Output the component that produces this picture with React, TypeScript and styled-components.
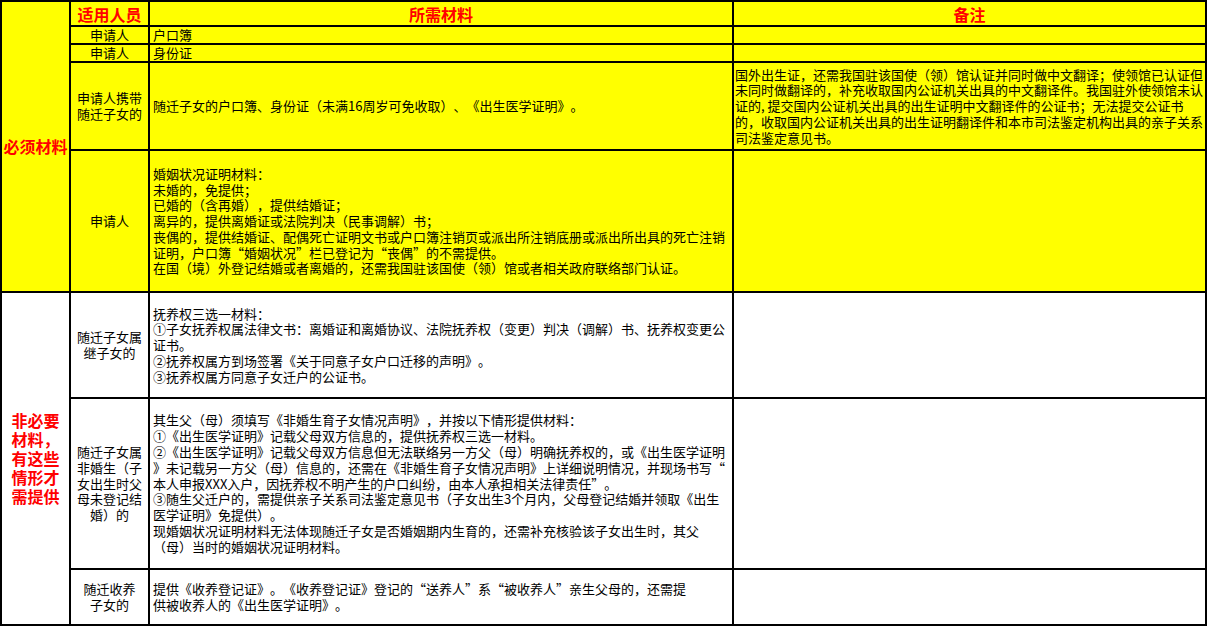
import React, { Fragment } from 'react';
import styled, { createGlobalStyle } from 'styled-components';

// Page reset: the sheet sits flush in the top-left corner
const GlobalStyle = createGlobalStyle`
  html, body {
    margin: 0;
    padding: 0;
    background: #ffffff;
  }
  body {
    font-family: "Noto Sans CJK SC", "Noto Sans", sans-serif;
    text-spacing-trim: space-all;
  }
`;

type Tone = 'yellow' | 'white';

interface Row {
    who: string[];
    material: string[];
    note: string[];
}

// The black grid background + 2px gaps draw the cell borders
const Sheet = styled.div`
  display: grid;
  grid-template-columns: 67px 77px 582px 471px;
  grid-template-rows: 23px 16px 16px 86px 140px 104px 169px 54px;
  gap: 2px;
  padding: 2px;
  width: 1207px;
  box-sizing: border-box;
  background: #000000;
`;

const Cell = styled.div<{ $tone: Tone }>`
  display: flex;
  align-items: center;
  background: ${(p) => (p.$tone === 'yellow' ? '#ffff00' : '#ffffff')};
  color: #000000;
  font-size: 13px;
  line-height: 15.8px;
  white-space: nowrap;
  overflow: hidden;
  min-width: 0;
  text-spacing-trim: space-all;
`;

const GroupCell = styled(Cell)<{ $rows: string }>`
  grid-column: 1;
  grid-row: ${(p) => p.$rows};
  justify-content: center;
  text-align: center;
  color: #ff0000;
  font-size: 16px;
  font-weight: 700;
  line-height: 19px;
  overflow: visible;
`;

const HeadCell = styled(Cell)`
  justify-content: center;
  color: #ff0000;
  font-size: 16px;
  font-weight: 700;
  line-height: 20px;
`;

const WhoCell = styled(Cell)`
  justify-content: center;
  text-align: center;
`;

const MaterialCell = styled(Cell)`
  padding-left: 3px;
`;

const NoteCell = styled(Cell)`
  padding-left: 1px;
`;

const required: Row[] = [
    { who: ['申请人'], material: ['户口簿'], note: [] },
    { who: ['申请人'], material: ['身份证'], note: [] },
    {
        who: ['申请人携带', '随迁子女的'],
        material: ['随迁子女的户口簿、身份证（未满16周岁可免收取）、《出生医学证明》。'],
        note: [
            '国外出生证，还需我国驻该国使（领）馆认证并同时做中文翻译；使领馆已认证但',
            '未同时做翻译的，补充收取国内公证机关出具的中文翻译件。我国驻外使领馆未认',
            '证的, 提交国内公证机关出具的出生证明中文翻译件的公证书；无法提交公证书',
            '的，收取国内公证机关出具的出生证明翻译件和本市司法鉴定机构出具的亲子关系',
            '司法鉴定意见书。',
        ],
    },
    {
        who: ['申请人'],
        material: [
            '婚姻状况证明材料：',
            '未婚的，免提供；',
            '已婚的（含再婚），提供结婚证；',
            '离异的，提供离婚证或法院判决（民事调解）书；',
            '丧偶的，提供结婚证、配偶死亡证明文书或户口簿注销页或派出所注销底册或派出所出具的死亡注销',
            '证明，户口簿“婚姻状况”栏已登记为“丧偶”的不需提供。',
            '在国（境）外登记结婚或者离婚的，还需我国驻该国使（领）馆或者相关政府联络部门认证。',
        ],
        note: [],
    },
];

const optional: Row[] = [
    {
        who: ['随迁子女属', '继子女的'],
        material: [
            '抚养权三选一材料：',
            '①子女抚养权属法律文书：离婚证和离婚协议、法院抚养权（变更）判决（调解）书、抚养权变更公',
            '证书。',
            '②抚养权属方到场签署《关于同意子女户口迁移的声明》。',
            '③抚养权属方同意子女迁户的公证书。',
        ],
        note: [],
    },
    {
        who: ['随迁子女属', '非婚生（子', '女出生时父', '母未登记结', '婚）的'],
        material: [
            '其生父（母）须填写《非婚生育子女情况声明》，并按以下情形提供材料：',
            '①《出生医学证明》记载父母双方信息的，提供抚养权三选一材料。',
            '②《出生医学证明》记载父母双方信息但无法联络另一方父（母）明确抚养权的，或《出生医学证明',
            '》未记载另一方父（母）信息的，还需在《非婚生育子女情况声明》上详细说明情况，并现场书写“',
            '本人申报XXX入户，因抚养权不明产生的户口纠纷，由本人承担相关法律责任”。',
            '③随生父迁户的，需提供亲子关系司法鉴定意见书（子女出生3个月内，父母登记结婚并领取《出生',
            '医学证明》免提供）。',
            '现婚姻状况证明材料无法体现随迁子女是否婚姻期内生育的，还需补充核验该子女出生时，其父',
            '（母）当时的婚姻状况证明材料。',
        ],
        note: [],
    },
    {
        who: ['随迁收养', '子女的'],
        material: [
            '提供《收养登记证》。《收养登记证》登记的“送养人”系“被收养人”亲生父母的，还需提',
            '供被收养人的《出生医学证明》。',
        ],
        note: [],
    },
];

// Render wrapped lines the way the sheet breaks them
function Lines({ lines }: { lines: string[] }) {
    return (
        <div>
            {lines.map((line, i) => (
                <Fragment key={i}>
                    {i > 0 && <br />}
                    {line}
                </Fragment>
            ))}
        </div>
    );
}

function Rows({ rows, tone }: { rows: Row[]; tone: Tone }) {
    return (
        <>
            {rows.map((row, i) => (
                <Fragment key={i}>
                    <WhoCell $tone={tone}>
                        <Lines lines={row.who} />
                    </WhoCell>
                    <MaterialCell $tone={tone}>
                        <Lines lines={row.material} />
                    </MaterialCell>
                    <NoteCell $tone={tone}>
                        <Lines lines={row.note} />
                    </NoteCell>
                </Fragment>
            ))}
        </>
    );
}

function App() {
    return (
        <>
            <GlobalStyle />
            <Sheet>
                <GroupCell $tone="yellow" $rows="1 / span 5">必须材料</GroupCell>
                <HeadCell $tone="yellow">适用人员</HeadCell>
                <HeadCell $tone="yellow">所需材料</HeadCell>
                <HeadCell $tone="yellow">备注</HeadCell>
                <Rows rows={required} tone="yellow" />

                <GroupCell $tone="white" $rows="6 / span 3">
                    <Lines lines={['非必要', '材料，', '有这些', '情形才', '需提供']} />
                </GroupCell>
                <Rows rows={optional} tone="white" />
            </Sheet>
        </>
    );
}

export default App;
